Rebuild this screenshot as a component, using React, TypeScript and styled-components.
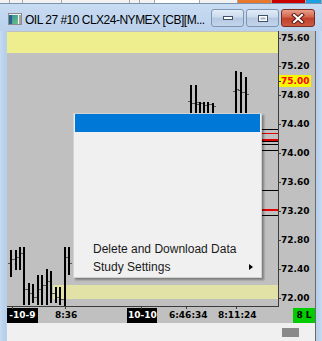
import React from 'react';
import styled, { createGlobalStyle } from 'styled-components';

const UI_FONT = `"Liberation Sans", Arial, sans-serif`;
const AXIS_FONT = `"DejaVu Sans", Verdana, sans-serif`;

// price scale of the chart row: y of 75.60 and pixels per point
const TOP_PRICE = 75.6;
const TOP_Y = 6.5;
const PX_PER_POINT = 72.36;
const priceY = (p: number) => TOP_Y + (TOP_PRICE - p) * PX_PER_POINT;

const taskCells = [
  { w: 10, bg: '#f2f2f2' },
  { w: 13, bg: '#f2f2f2' },
  { w: 39, bg: '#f2f2f2' },
  { w: 68, bg: '#f2f2f2' },
  { w: 10, bg: '#f2f2f2' },
  { w: 15, bg: '#f2f2f2' },
  { w: 45, bg: '#ffffff' },
  { w: 38, bg: '#f2f2f2' },
  { w: 34, bg: '#e8782c' },
  { w: 34, bg: '#c80000' },
  { w: 16, bg: '#1ba1e2' },
];

type Bar = { x: number; high: number; low: number; open: number; close: number };

// x / high / low in plot pixels
const bars: Bar[] = [
  { x: 183, high: 54, low: 94, open: 70, close: 72 },
  { x: 188, high: 54, low: 94, open: 72, close: 71 },
  { x: 192, high: 71, low: 94, open: 73, close: 72 },
  { x: 196, high: 71, low: 94, open: 72, close: 74 },
  { x: 200, high: 71, low: 94, open: 74, close: 73 },
  { x: 205, high: 72, low: 94, open: 73, close: 75 },
  { x: 228, high: 40, low: 94, open: 60, close: 58 },
  { x: 233, high: 41, low: 94, open: 59, close: 61 },
  { x: 238, high: 46, low: 94, open: 61, close: 63 },
  { x: 3, high: 219, low: 246, open: 232, close: 228 },
  { x: 8, high: 219, low: 239, open: 228, close: 226 },
  { x: 12, high: 216, low: 239, open: 226, close: 222 },
  { x: 16, high: 216, low: 274, open: 222, close: 258 },
  { x: 21, high: 252, low: 274, open: 258, close: 262 },
  { x: 25, high: 253, low: 272, open: 262, close: 266 },
  { x: 30, high: 244, low: 274, open: 266, close: 258 },
  { x: 34, high: 244, low: 274, open: 258, close: 254 },
  { x: 39, high: 238, low: 274, open: 254, close: 250 },
  { x: 43, high: 240, low: 272, open: 250, close: 262 },
  { x: 48, high: 256, low: 272, open: 262, close: 266 },
  { x: 52, high: 256, low: 274, open: 266, close: 268 },
  { x: 57, high: 216, low: 275, open: 268, close: 226 },
  { x: 61, high: 216, low: 244, open: 226, close: 232 },
];

const levelLines = [
  { y: 98, color: '#000', h: 1 },
  { y: 102, color: '#e00000', h: 1 },
  { y: 108, color: '#e00000', h: 2 },
  { y: 110, color: '#000', h: 1 },
  { y: 113, color: '#000', h: 1 },
  { y: 119, color: '#000', h: 1 },
  { y: 159, color: '#000', h: 1 },
  { y: 178, color: '#e00000', h: 2 },
  { y: 184, color: '#000', h: 1 },
];

const priceLabels = [75.6, 75.2, 74.8, 74.4, 74.0, 73.6, 73.2, 72.8, 72.4, 72.0];
const lastPrice = 75.0;

type TimeItem = { text: string; left: number; width?: number; kind: 'date' | 'time' | 'count' };

const timeItems: TimeItem[] = [
  { text: '-10-9', left: 0, width: 31, kind: 'date' },
  { text: '8:36', left: 47, kind: 'time' },
  { text: '10-10', left: 120, width: 30, kind: 'date' },
  { text: '6:46:34', left: 161, kind: 'time' },
  { text: '8:11:24', left: 210, kind: 'time' },
  { text: '8 L', left: 286, width: 22, kind: 'count' },
];

const timeTicks = [5, 58, 134, 179, 229];

const menuItems = [
  { label: '', active: true },
  { label: '' },
  { label: '' },
  { label: '' },
  { label: '' },
  { label: '' },
  { label: '' },
  { label: 'Delete and Download Data' },
  { label: 'Study Settings', submenu: true },
];

const App = () => {
  return (
    <>
      <GlobalStyle />
      <St.Screen>
        <St.TaskStrip>
          {taskCells.map((c, i) => (
            <St.TaskCell key={i} $w={c.w} $bg={c.bg} />
          ))}
        </St.TaskStrip>

        <St.Window>
          <St.TitleBar>
            <St.AppIcon width="14" height="12" viewBox="0 0 14 12">
              <defs>
                <linearGradient id="iconFill" x1="0" y1="0" x2="1" y2="1">
                  <stop offset="0" stopColor="#2d8fa0" />
                  <stop offset="1" stopColor="#6cc27e" />
                </linearGradient>
              </defs>
              <rect x="0.5" y="0.5" width="13" height="11" fill="#f4f4f4" stroke="#8b8b8b" />
              <rect x="1" y="2" width="9" height="9" fill="url(#iconFill)" />
              <rect x="1" y="2" width="3" height="9" fill="#2a5f96" />
              <rect x="11.5" y="2" width="1" height="9" fill="#555" />
            </St.AppIcon>
            <St.Title>OIL 27 #10 CLX24-NYMEX [CB][M...</St.Title>
            <St.Controls>
              <St.CaptionButton>
                <svg width="12" height="6" viewBox="0 0 12 6">
                  <rect x="1.5" y="1.5" width="9" height="3" fill="#fff" stroke="#3f5069" />
                </svg>
              </St.CaptionButton>
              <St.CaptionButton>
                <svg width="12" height="9" viewBox="0 0 12 9">
                  <rect x="1.5" y="1.5" width="9" height="6" fill="#fff" stroke="#3f5069" />
                  <rect x="3.5" y="3.5" width="5" height="2" fill="#9fb1c8" />
                </svg>
              </St.CaptionButton>
              <St.CloseButton>
                <svg width="14" height="11" viewBox="0 0 14 11">
                  <path d="M3 2 L11 9 M11 2 L3 9" stroke="#5a1a12" strokeWidth="4" strokeLinecap="square" />
                  <path d="M3 2 L11 9 M11 2 L3 9" stroke="#fff" strokeWidth="2" strokeLinecap="square" />
                </svg>
              </St.CloseButton>
            </St.Controls>
          </St.TitleBar>

          <St.Client>
            <St.ChartRow>
              <St.Plot>
                <svg width="271" height="275" viewBox="0 0 271 275">
                  <rect x="0" y="1" width="271" height="21" fill="#eeee8e" />
                  <rect x="46" y="254" width="225" height="14" fill="#e2e2a6" />
                  {levelLines.map((l, i) => (
                    <rect key={i} x="205" y={l.y} width="66" height={l.h} fill={l.color} />
                  ))}
                  {bars.map((b, i) => (
                    <g key={i}>
                      <rect x={b.x} y={b.high} width="2" height={b.low - b.high} fill="#000" />
                      <rect x={b.x - 2} y={b.open} width="2" height="1" fill="#555" />
                      <rect x={b.x + 2} y={b.close} width="2" height="1" fill="#555" />
                    </g>
                  ))}
                </svg>
              </St.Plot>
              <St.PriceAxis>
                {priceLabels.map((p) => (
                  <St.PriceLabel key={p} style={{ top: priceY(p) - 6 }}>
                    {p.toFixed(2)}
                  </St.PriceLabel>
                ))}
                <St.PriceLabel $current style={{ top: priceY(lastPrice) - 6 }}>
                  {lastPrice.toFixed(2)}
                </St.PriceLabel>
              </St.PriceAxis>
            </St.ChartRow>

            <St.TimeAxis>
              {timeItems.map((t) => (
                <St.TimeLabel key={t.text} $kind={t.kind} style={{ left: t.left, width: t.width }}>
                  {t.text}
                </St.TimeLabel>
              ))}
              {timeTicks.map((x) => (
                <St.TimeTick key={x} style={{ left: x }} />
              ))}
            </St.TimeAxis>

            <St.StatusBar>
              <St.StatusBlock />
            </St.StatusBar>

            <St.Menu>
              {menuItems.map((m, i) => (
                <St.MenuItem key={i} $active={m.active}>
                  <span>{m.label}</span>
                  {m.submenu && <St.SubArrow />}
                </St.MenuItem>
              ))}
            </St.Menu>
          </St.Client>
        </St.Window>
      </St.Screen>
    </>
  );
};

export default App;

const GlobalStyle = createGlobalStyle`
  html, body {
    margin: 0;
    padding: 0;
  }
  body {
    background: #f0f0f0;
    overflow: hidden;
  }
`;

const St = {
  Screen: styled.div`
    width: 322px;
    height: 341px;
    overflow: hidden;
    display: flex;
    flex-direction: column;
    font-family: ${UI_FONT};
  `,

  TaskStrip: styled.div`
    display: flex;
    height: 3px;
    flex-shrink: 0;
  `,

  TaskCell: styled.div<{ $w: number; $bg: string }>`
    width: ${({ $w }) => $w}px;
    flex-shrink: 0;
    background: ${({ $bg }) => $bg};
    border-right: 1px solid #a9a9a9;
    box-sizing: border-box;
  `,

  Window: styled.div`
    flex: 1;
    display: flex;
    flex-direction: column;
    box-sizing: border-box;
    border-top: 1px solid #7c92b1;
    padding: 0 6px 0 7px;
    background: linear-gradient(90deg, #c7dbf2 0px, #b9d0ec 4px, #b9d0ec calc(100% - 4px), #c7dbf2 100%);
  `,

  TitleBar: styled.div`
    height: 27px;
    flex-shrink: 0;
    display: flex;
    align-items: flex-start;
    background: linear-gradient(#c8dcf2, #bad1ec);
    margin: 0 -6px 0 -7px;
    padding: 0 7px;
  `,

  AppIcon: styled.svg`
    margin: 9px 0 0 1px;
    flex-shrink: 0;
  `,

  Title: styled.div`
    flex: 1;
    min-width: 0;
    margin: 9px 0 0 3px;
    font-size: 12px;
    line-height: 14px;
    letter-spacing: -0.5px;
    color: #000;
    white-space: nowrap;
  `,

  Controls: styled.div`
    display: flex;
    margin-top: 5px;
  `,

  CaptionButton: styled.div`
    width: 33px;
    height: 18px;
    box-sizing: border-box;
    margin-right: 2px;
    border: 1px solid #7e94b3;
    border-radius: 3px;
    background: linear-gradient(#e3ecf7, #cbdaec 45%, #b5c8e1 50%, #c3d5ea);
    display: flex;
    align-items: center;
    justify-content: center;
  `,

  CloseButton: styled.div`
    width: 34px;
    height: 18px;
    box-sizing: border-box;
    border: 1px solid #7a2b20;
    border-radius: 3px;
    background: linear-gradient(#e7a08c, #d2634b 45%, #c1402b 50%, #cc5a40);
    display: flex;
    align-items: center;
    justify-content: center;
  `,

  Client: styled.div`
    flex: 1;
    position: relative;
    display: flex;
    flex-direction: column;
    background: #c0c0c0;
    border-right: 1px solid #6a6a6a;
  `,

  ChartRow: styled.div`
    display: flex;
    height: 276px;
    flex-shrink: 0;
  `,

  Plot: styled.div`
    width: 271px;
    height: 275px;
    border-right: 1px solid #3c3c3c;
    border-bottom: 1px solid #3c3c3c;
    svg {
      display: block;
    }
  `,

  PriceAxis: styled.div`
    flex: 1;
    position: relative;
  `,

  PriceLabel: styled.div<{ $current?: boolean }>`
    position: absolute;
    left: 0;
    height: 12px;
    line-height: 12px;
    padding: 0 2px;
    font-family: ${AXIS_FONT};
    font-weight: bold;
    font-size: 9px;
    color: ${({ $current }) => ($current ? '#ff0000' : '#000')};
    background: ${({ $current }) => ($current ? '#f7f700' : 'transparent')};
    z-index: ${({ $current }) => ($current ? 1 : 0)};

    &::before {
      content: '';
      position: absolute;
      left: 0;
      top: 6px;
      width: 2px;
      height: 1px;
      background: #3c3c3c;
    }
  `,

  TimeAxis: styled.div`
    position: relative;
    height: 16px;
    flex-shrink: 0;
    overflow: hidden;
  `,

  TimeLabel: styled.div<{ $kind: 'date' | 'time' | 'count' }>`
    position: absolute;
    top: 1px;
    height: 15px;
    line-height: 15px;
    box-sizing: border-box;
    padding: 0 1px;
    text-align: ${({ $kind }) => ($kind === 'time' ? 'left' : 'center')};
    font-family: ${AXIS_FONT};
    font-weight: bold;
    font-size: 9px;
    white-space: nowrap;
    overflow: hidden;
    color: ${({ $kind }) => ($kind === 'date' ? '#fff' : '#000')};
    background: ${({ $kind }) => ($kind === 'date' ? '#000' : $kind === 'count' ? '#00cc00' : 'transparent')};
  `,

  TimeTick: styled.div`
    position: absolute;
    top: 0;
    width: 1px;
    height: 2px;
    background: #3c3c3c;
  `,

  StatusBar: styled.div`
    flex: 1;
    display: flex;
    justify-content: flex-end;
    align-items: flex-start;
    padding: 5px 16px 0 0;
    background: #f0f0f0;
  `,

  StatusBlock: styled.div`
    width: 17px;
    height: 9px;
    background: #8a8a8a;
  `,

  Menu: styled.div`
    position: absolute;
    left: 66px;
    top: 82px;
    width: 189px;
    box-sizing: border-box;
    padding: 0 1px 1px;
    border: 1px solid #d2d2d2;
    background: #f0f0f0;
    box-shadow: 2px 2px 2px rgba(0, 0, 0, 0.35);
    z-index: 2;
  `,

  MenuItem: styled.div<{ $active?: boolean }>`
    height: 18px;
    display: flex;
    align-items: center;
    justify-content: space-between;
    padding: 0 7px 0 18px;
    font-family: ${UI_FONT};
    font-size: 12px;
    color: ${({ $active }) => ($active ? '#fff' : '#1a1a1a')};
    background: ${({ $active }) => ($active ? '#0078d7' : 'transparent')};
    white-space: nowrap;
  `,

  SubArrow: styled.span`
    width: 0;
    height: 0;
    border-top: 3.5px solid transparent;
    border-bottom: 3.5px solid transparent;
    border-left: 4px solid #000;
  `,
};
